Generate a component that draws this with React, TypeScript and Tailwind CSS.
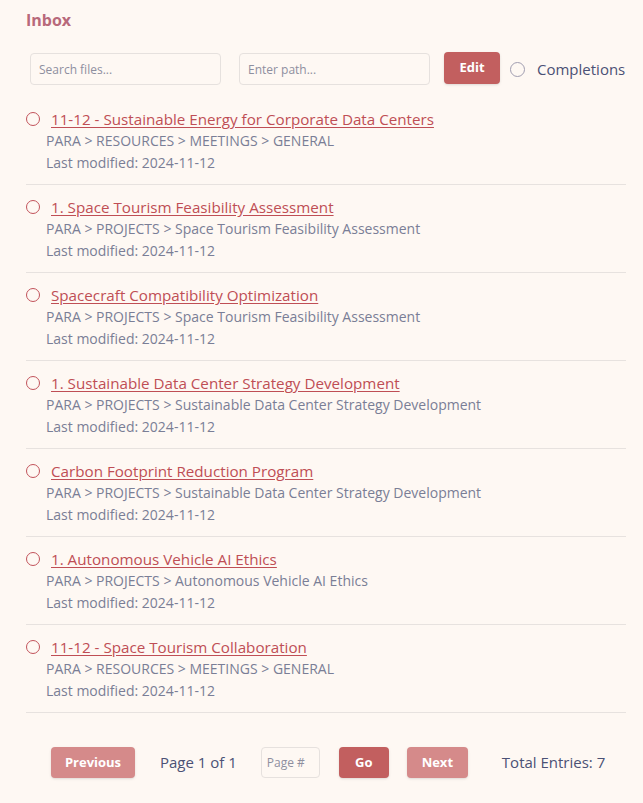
import { useState } from 'react'

type Entry = { title: string; path: string; modified: string }

const entries: Entry[] = [
  { title: '11-12 - Sustainable Energy for Corporate Data Centers', path: 'PARA > RESOURCES > MEETINGS > GENERAL', modified: '2024-11-12' },
  { title: '1. Space Tourism Feasibility Assessment', path: 'PARA > PROJECTS > Space Tourism Feasibility Assessment', modified: '2024-11-12' },
  { title: 'Spacecraft Compatibility Optimization', path: 'PARA > PROJECTS > Space Tourism Feasibility Assessment', modified: '2024-11-12' },
  { title: '1. Sustainable Data Center Strategy Development', path: 'PARA > PROJECTS > Sustainable Data Center Strategy Development', modified: '2024-11-12' },
  { title: 'Carbon Footprint Reduction Program', path: 'PARA > PROJECTS > Sustainable Data Center Strategy Development', modified: '2024-11-12' },
  { title: '1. Autonomous Vehicle AI Ethics', path: 'PARA > PROJECTS > Autonomous Vehicle AI Ethics', modified: '2024-11-12' },
  { title: '11-12 - Space Tourism Collaboration', path: 'PARA > RESOURCES > MEETINGS > GENERAL', modified: '2024-11-12' },
]

export default function App() {
  const [search, setSearch] = useState('')
  const [path, setPath] = useState('')
  const [page, setPage] = useState('')

  return (
    <div className="min-h-screen bg-[#fef8f3] text-[#4b5175] pl-[26px] pr-[17px] pt-[9px] font-['Open_Sans',sans-serif]">
      <h1 className="text-[16px] font-bold text-[#b8697b] leading-[22px]">Inbox</h1>

      <div className="flex items-center mt-[22px] pl-1 whitespace-nowrap">
        <input
          className="shrink-0 w-[191px] h-[32px] bg-[#fef8f3] border border-[#e6e1de] rounded-[4px] px-2 text-[12px] placeholder-[#8e8f9f] outline-none"
          placeholder="Search files..."
          value={search}
          onChange={(e) => setSearch(e.target.value)}
        />
        <input
          className="shrink-0 w-[191px] h-[32px] ml-[18px] bg-[#fef8f3] border border-[#e6e1de] rounded-[4px] px-2 text-[12px] placeholder-[#8e8f9f] outline-none"
          placeholder="Enter path..."
          value={path}
          onChange={(e) => setPath(e.target.value)}
        />
        <button className="shrink-0 ml-[14px] w-[56px] h-[32px] -mt-[2px] bg-[#c25f5f] text-white text-[13px] font-bold rounded-[4px] shadow-sm">Edit</button>
        <span className="shrink-0 ml-[10px] w-[15px] h-[15px] rounded-full border-[1.5px] border-[#a09db0]" />
        <span className="ml-[12px] text-[15px] text-[#4b5175]">Completions</span>
      </div>

      <ul className="mt-[12px]">
        {entries.map((e) => (
          <li key={e.title + e.path} className="pt-[11px] pb-[10px] border-b border-[#e7e2df]">
            <div className="flex items-center h-[22px]">
              <span className="w-[14px] h-[14px] rounded-full border-[1.5px] border-[#c2535b] shrink-0" />
              <a href="#" className="ml-[11px] text-[15.2px] text-[#bf4e55] underline underline-offset-2 leading-[22px]">{e.title}</a>
            </div>
            <div className="pl-5 text-[14px] text-[#7a7e96] leading-[22px]">{e.path}</div>
            <div className="pl-5 text-[14px] text-[#7a7e96] leading-[22px]">Last modified: {e.modified}</div>
          </li>
        ))}
      </ul>

      <div className="flex items-center mt-[34px] pl-[25px] whitespace-nowrap">
        <button className="w-[84px] h-[31px] bg-[#d58a8a] text-white text-[13px] font-bold rounded-[4px] shadow-sm">Previous</button>
        <span className="ml-[25px] text-[15px] text-[#4b5175]">Page 1 of 1</span>
        <input
          className="ml-[24px] w-[59px] h-[31px] bg-[#fef8f3] border border-[#e6e1de] rounded-[4px] px-[5px] text-[12px] placeholder-[#8e8f9f] outline-none"
          placeholder="Page #"
          value={page}
          onChange={(e) => setPage(e.target.value)}
        />
        <button className="ml-[19px] w-[50px] h-[31px] bg-[#c25f5f] text-white text-[13px] font-bold rounded-[4px] shadow-sm">Go</button>
        <button className="ml-[18px] w-[61px] h-[31px] bg-[#d58a8a] text-white text-[13px] font-bold rounded-[4px] shadow-sm">Next</button>
        <span className="ml-[34px] text-[15px] text-[#4b5175]">Total Entries: 7</span>
      </div>
    </div>
  )
}
